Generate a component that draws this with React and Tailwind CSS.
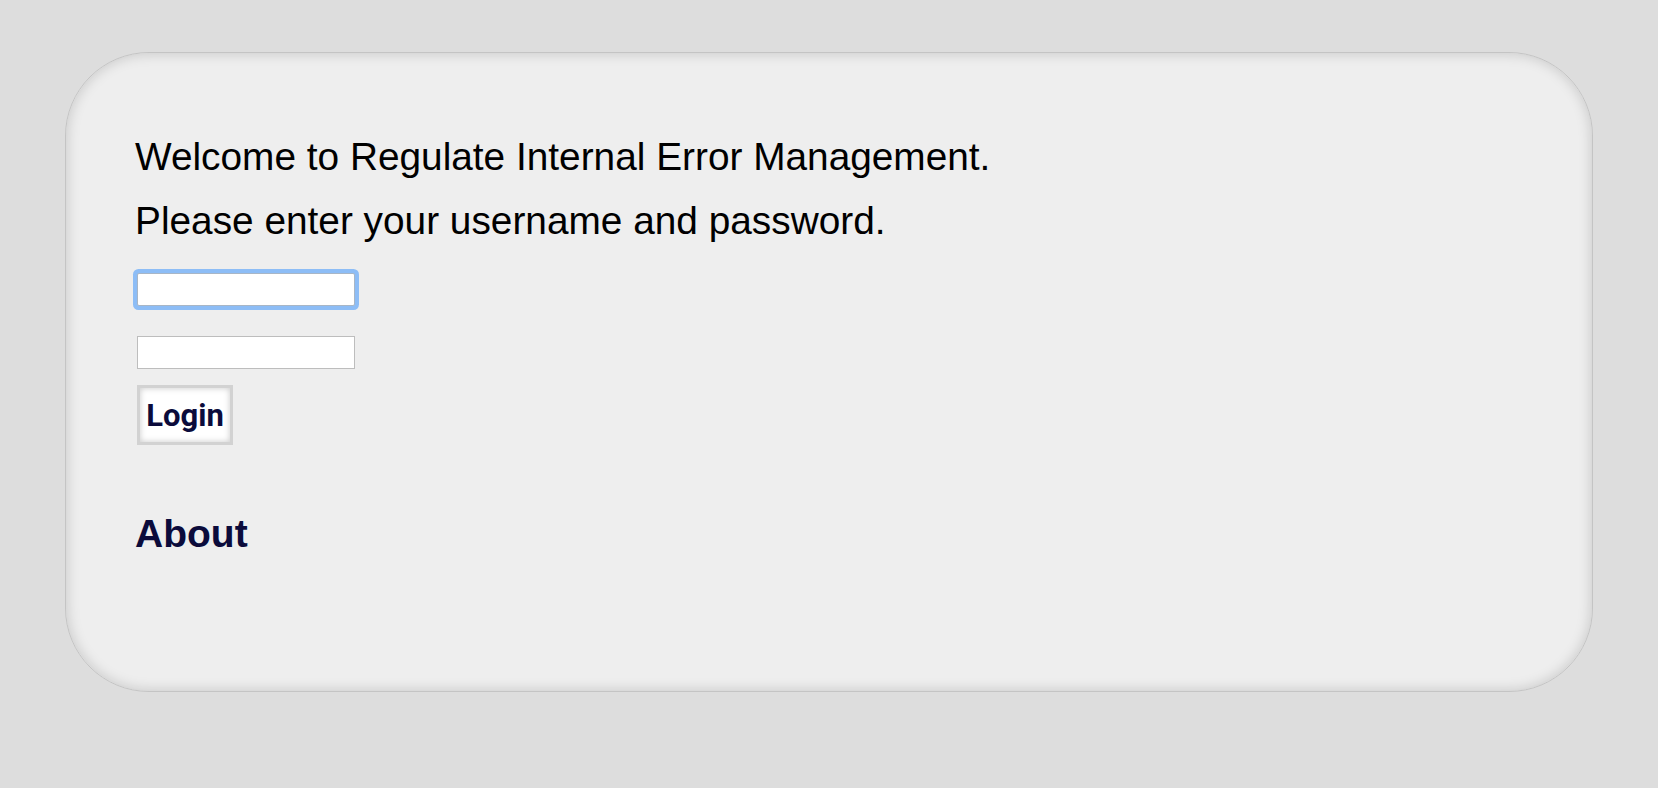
import React from 'react';

function App() {
  return (
    <div className="min-h-screen bg-[#dddddd] pt-[52px] px-[65px] pb-[96px]" style={{ fontFamily: '"Liberation Sans", Arial, sans-serif' }}>
      <div className="h-[640px] rounded-[84px] border border-[#c4c4c4] bg-[#eeeeee] shadow-[inset_0_0_14px_rgba(0,0,0,0.18)] pl-[69px] pt-[72px]">
        <p className="text-[38.8px] leading-[64px] text-black">Welcome to Regulate Internal Error Management.</p>
        <p className="text-[38.8px] leading-[64px] text-black">Please enter your username and password.</p>

        <form className="flex flex-col items-start mt-[20px] ml-[2px]" onSubmit={(e) => e.preventDefault()}>
          <input
            type="text"
            className="w-[218px] h-[33px] bg-white border border-[#a8b6c6] rounded-[2px] shadow-[0_0_0_4px_#8dbdf6] outline-none"
          />
          <input
            type="password"
            className="w-[218px] h-[33px] bg-white border border-[#bdbdbd] mt-[30px] outline-none"
          />
          <button
            type="submit"
            className="mt-[16px] w-[96px] h-[60px] flex items-center justify-center bg-white border-[3px] border-[#d2d2d2] shadow-[inset_0_0_6px_rgba(0,0,0,0.22)] text-[31px] font-bold text-[#0b0b3b] pt-[2px]"
            style={{ fontFamily: 'Roboto, "Liberation Sans", sans-serif' }}
          >
            Login
          </button>
        </form>

        <h2 className="mt-[67px] text-[39px] font-bold text-[#0b0b3b] leading-[44px]">About</h2>
      </div>
    </div>
  );
}

export default App;
